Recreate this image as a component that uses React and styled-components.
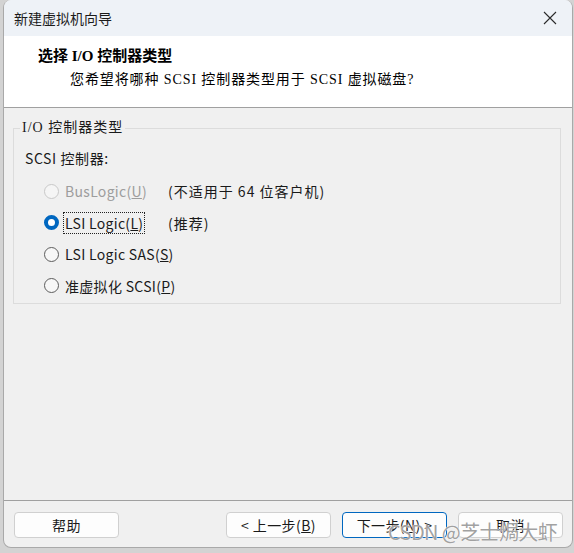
import React from 'react';
import styled, { createGlobalStyle } from 'styled-components';

const GlobalStyle = createGlobalStyle`
  html, body {
    margin: 0;
    padding: 0;
    background: #d3d3d3;
  }
  body {
    font-family: "Noto Sans CJK SC", sans-serif;
    font-size: 14px;
    color: #1a1a1a;
  }
`;

const Page = styled.div`
  position: relative;
  width: 574px;
  height: 553px;
  padding-left: 3px;
  box-sizing: border-box;
`;

const Window = styled.div`
  width: 570px;
  height: 548px;
  box-sizing: border-box;
  border: 1px solid #a9a9a9;
  border-top: none;
  border-radius: 8px;
  overflow: hidden;
  background: #f0f0f0;
  display: flex;
  flex-direction: column;
`;

const TitleBar = styled.div`
  height: 36px;
  flex: none;
  display: flex;
  align-items: center;
  justify-content: space-between;
  padding: 0 14px 0 10px;
  background: #eef2f7;
  font-size: 14px;
  line-height: 20px;
  color: #1b1b1b;
`;

const CloseButton = styled.div`
  width: 14px;
  height: 14px;
  display: flex;
  margin-right: 1px;
`;

const Header = styled.div`
  height: 72px;
  flex: none;
  box-sizing: border-box;
  background: #ffffff;
  border-bottom: 1px solid #a0a0a0;
  padding: 10px 0 0 34px;
`;

const HeaderTitle = styled.div`
  font-family: "Liberation Serif", "Noto Sans CJK SC", serif;
  font-weight: bold;
  font-size: 15px;
  line-height: 20px;
  color: #000;
`;

const HeaderSub = styled.div`
  font-family: "Liberation Serif", "Noto Sans CJK SC", serif;
  font-size: 14px;
  line-height: 20px;
  letter-spacing: 0.9px;
  margin: 4px 0 0 32px;
  color: #000;
`;

const Body = styled.div`
  flex: 1;
  padding: 10px 11px 0 9px;
`;

const GroupBox = styled.fieldset`
  margin: 0;
  padding: 10px 11px 6px 11px;
  border: 1px solid #dcdcdc;
  border-radius: 0;
`;

const Legend = styled.legend`
  margin-left: -5px;
  padding: 0 2px;
  font-family: "Liberation Serif", "Noto Sans CJK SC", serif;
  font-size: 14px;
  line-height: 20px;
  letter-spacing: 1px;
  color: #1a1a1a;
`;

const FieldLabel = styled.div`
  line-height: 20px;
  letter-spacing: 0.6px;
`;

const RadioList = styled.div`
  display: flex;
  flex-direction: column;
  gap: 9.5px;
  margin-top: 12px;
  padding-left: 19px;
`;

const Row = styled.div`
  height: 22px;
  display: grid;
  grid-template-columns: 124px auto;
  align-items: center;
  white-space: nowrap;
`;

const Option = styled.label`
  display: flex;
  align-items: center;
  gap: 5px;
  color: ${p => (p.$disabled ? '#9d9d9d' : '#1a1a1a')};
  line-height: 20px;
`;

const RadioDot = styled.span`
  width: 15px;
  height: 15px;
  box-sizing: border-box;
  border-radius: 50%;
  flex: none;
  border: ${p => (p.$checked ? '4.5px solid #0067c0' : `1px solid ${p.$disabled ? '#c8c8c8' : '#5c5c5c'}`)};
  background: ${p => (p.$checked ? '#ffffff' : p.$disabled ? '#f5f5f5' : '#f7f7f7')};
`;

const OptionText = styled.span`
  padding: 0 1px;
  letter-spacing: 0.3px;
  outline: ${p => (p.$focused ? '1px dotted #222' : 'none')};
  outline-offset: 0;
`;

const Note = styled.span`
  line-height: 20px;
  letter-spacing: 1px;
  color: #1a1a1a;
`;

const Footer = styled.div`
  flex: none;
  border-top: 1px solid #a0a0a0;
  padding: 11px 9px 9px 10px;
  display: flex;
  align-items: center;
`;

const Spacer = styled.div`
  flex: 1;
`;

const ButtonGroup = styled.div`
  display: flex;
  gap: 11px;
`;

const Button = styled.button`
  width: 105px;
  height: 26px;
  box-sizing: border-box;
  background: #fdfdfd;
  border: 1px solid ${p => (p.$primary ? '#0067c0' : '#d0d0d0')};
  border-radius: 4px;
  font-family: "Noto Sans CJK SC", sans-serif;
  font-size: 14px;
  line-height: 20px;
  letter-spacing: 0.4px;
  color: #1a1a1a;
  padding: 0;
`;

const Watermark = styled.div`
  position: absolute;
  left: 388px;
  top: 519px;
  font-family: "Noto Sans CJK SC", sans-serif;
  font-size: 20px;
  line-height: 26px;
  color: rgba(135, 135, 135, 0.8);
  text-shadow: 0 0 1px #fff, 0 0 1px #fff;
  letter-spacing: -0.6px;
  white-space: nowrap;
  pointer-events: none;
`;

const options = [
  { label: 'BusLogic', key: 'U', note: '(不适用于 64 位客户机)', disabled: true },
  { label: 'LSI Logic', key: 'L', note: '(推荐)', checked: true },
  { label: 'LSI Logic SAS', key: 'S' },
  { label: '准虚拟化 SCSI', key: 'P' },
];

const App = () => (
  <Page>
    <GlobalStyle />
    <Window>
      <TitleBar>
        <span>新建虚拟机向导</span>
        <CloseButton>
          <svg width="14" height="14" viewBox="0 0 14 14">
            <path d="M1 1 L13 13 M13 1 L1 13" stroke="#2b2b2b" strokeWidth="1.1" fill="none" />
          </svg>
        </CloseButton>
      </TitleBar>
      <Header>
        <HeaderTitle>选择 I/O 控制器类型</HeaderTitle>
        <HeaderSub>您希望将哪种 SCSI 控制器类型用于 SCSI 虚拟磁盘?</HeaderSub>
      </Header>
      <Body>
        <GroupBox>
          <Legend>I/O 控制器类型</Legend>
          <FieldLabel>SCSI 控制器:</FieldLabel>
          <RadioList>
            {options.map(o => (
              <Row key={o.key}>
                <Option $disabled={o.disabled}>
                  <RadioDot $checked={o.checked} $disabled={o.disabled} />
                  <OptionText $focused={o.checked}>
                    {o.label}(<u>{o.key}</u>)
                  </OptionText>
                </Option>
                {o.note && <Note>{o.note}</Note>}
              </Row>
            ))}
          </RadioList>
        </GroupBox>
      </Body>
      <Footer>
        <Button>帮助</Button>
        <Spacer />
        <ButtonGroup>
          <Button>&lt; 上一步(<u>B</u>)</Button>
          <Button $primary>下一步(<u>N</u>) &gt;</Button>
          <Button>取消</Button>
        </ButtonGroup>
      </Footer>
    </Window>
    <Watermark>CSDN @芝士焗大虾</Watermark>
  </Page>
);

export default App;
